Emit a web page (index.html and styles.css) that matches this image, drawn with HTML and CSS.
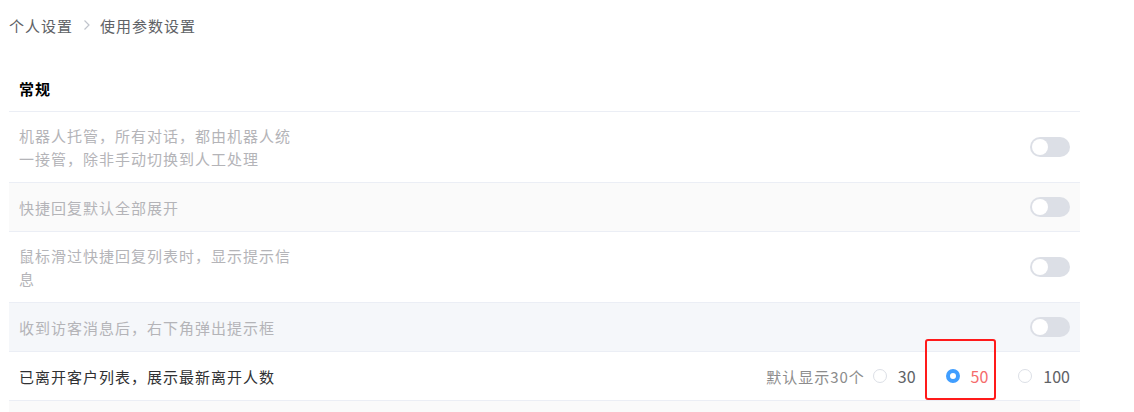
FILE: index.html
```html
<!DOCTYPE html>
<html lang="zh">
<head>
<meta charset="utf-8">
<link rel="stylesheet" href="styles.css">
</head>
<body>
<div class="page">
  <div class="breadcrumb">
    <span class="crumb">个人设置</span>
    <svg class="sep" width="8" height="12" viewBox="0 0 8 12"><path d="M1.5 1.5 L6 6 L1.5 10.5" fill="none" stroke="#c0c4cc" stroke-width="1.2"/></svg>
    <span class="crumb current">使用参数设置</span>
  </div>
  <div class="section">
    <div class="section-title">常规</div>
    <div class="row">
      <div class="label disabled">机器人托管，所有对话，都由机器人统一接管，除非手动切换到人工处理</div>
      <span class="switch"><span class="knob"></span></span>
    </div>
    <div class="row alt">
      <div class="label disabled">快捷回复默认全部展开</div>
      <span class="switch"><span class="knob"></span></span>
    </div>
    <div class="row">
      <div class="label disabled">鼠标滑过快捷回复列表时，显示提示信息</div>
      <span class="switch"><span class="knob"></span></span>
    </div>
    <div class="row alt2">
      <div class="label disabled">收到访客消息后，右下角弹出提示框</div>
      <span class="switch"><span class="knob"></span></span>
    </div>
    <div class="row">
      <div class="label">已离开客户列表，展示最新离开人数</div>
      <div class="radios">
        <span class="hint">默认显示30个</span>
        <label class="radio"><span class="dot"></span><span class="num">30</span></label>
        <label class="radio checked"><span class="dot"></span><span class="num">50</span><span class="mark"></span></label>
        <label class="radio"><span class="dot"></span><span class="num">100</span></label>
      </div>
    </div>
    <div class="row alt tail"></div>
  </div>
</div>
</body>
</html>
```
FILE: styles.css
```css
* { box-sizing: border-box; }
html, body { margin: 0; padding: 0; background: #fff; }
body {
  font-family: "Noto Sans CJK SC", "Noto Sans", sans-serif;
  font-size: 15px;
  color: #303133;
  overflow: hidden;
}
.page { padding-left: 9px; width: 1080px; }
.breadcrumb {
  height: 50px;
  display: flex;
  align-items: center;
  font-size: 15px;
  color: #606266;
  letter-spacing: 1px;
}
.sep { margin: 0 9px 0 10px; }
.section-title {
  font-weight: bold;
  color: #000;
  font-size: 15px;
  letter-spacing: 1px;
  padding: 27px 10px 11px;
  line-height: 23px;
  border-bottom: 1px solid #ebeef5;
}
.row {
  display: flex;
  align-items: center;
  justify-content: space-between;
  padding: 12px 10px;
  border-bottom: 1px solid #ebeef5;
  line-height: 23px;
  min-height: 49px;
}
.row.alt { background: #fafafa; }
.row.alt2 { background: #f5f7fa; }
.row.tail { border-bottom: none; }
.label {
  max-width: 282px;
  letter-spacing: 1px;
  color: #303133;
}
.label.disabled { color: #b4b4b8; }
.switch {
  width: 40px;
  height: 20px;
  border-radius: 10px;
  background: #dcdfe6;
  position: relative;
  flex: none;
}
.knob {
  position: absolute;
  left: 2px;
  top: 2px;
  width: 16px;
  height: 16px;
  border-radius: 50%;
  background: #fff;
}
.radios { display: flex; align-items: center; }
.hint { color: #8c8c8c; letter-spacing: 1px; margin-right: 8px; }
.radio {
  display: flex;
  align-items: center;
  position: relative;
  color: #606266;
  font-size: 16px;
}
.radio + .radio { margin-left: 30px; }
.dot {
  width: 14px;
  height: 14px;
  border-radius: 50%;
  border: 1px solid #dcdfe6;
  background: #fff;
  margin-right: 11px;
}
.radio.checked .dot { border: 4px solid #409eff; }
.radio.checked .num { color: #f56c6c; }
.mark {
  position: absolute;
  left: -21px;
  top: -26px;
  width: 71px;
  height: 61px;
  border: 2px solid #ff1a1a;
  border-radius: 3px;
}
```
